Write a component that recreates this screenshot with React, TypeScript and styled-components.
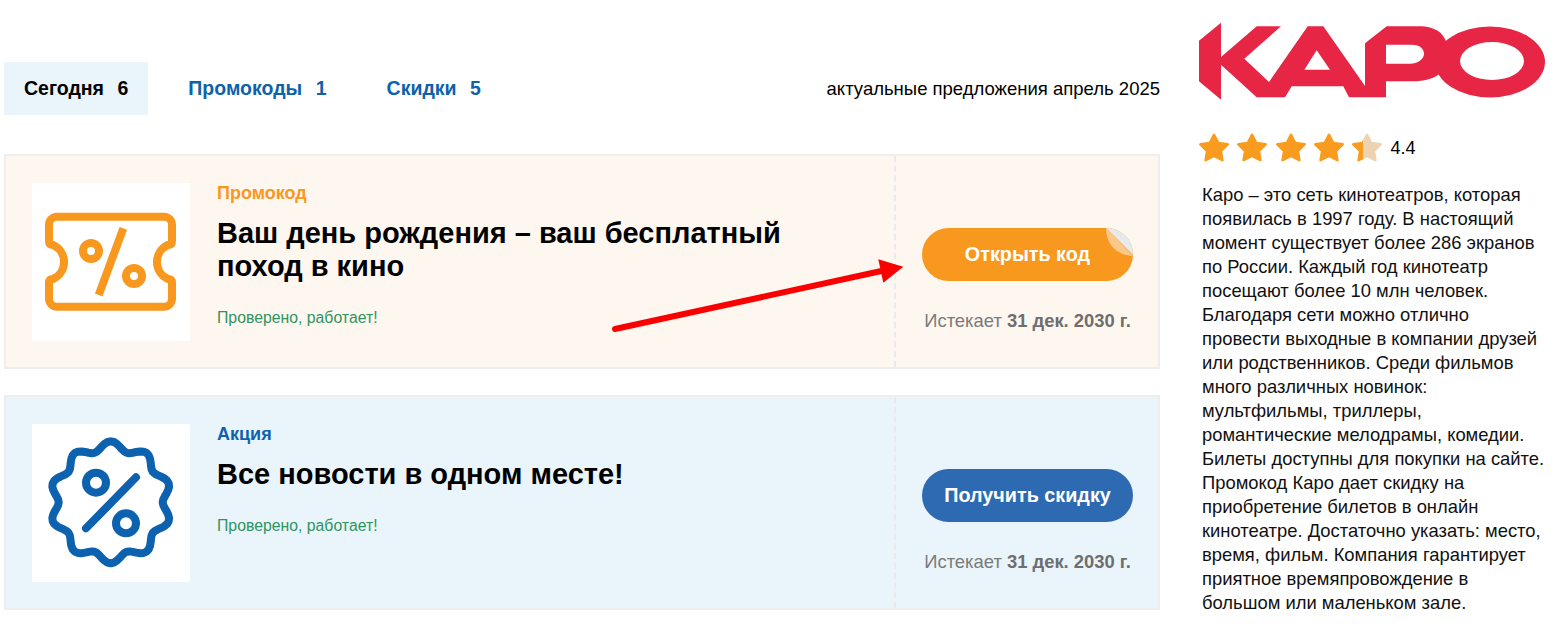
import React from "react";
import styled, { createGlobalStyle } from "styled-components";

const Global = createGlobalStyle`
  html, body { margin: 0; padding: 0; background: #fff; }
  body { font-family: "Liberation Sans", Arial, sans-serif; color: #000; }
`;

const Page = styled.div`
  display: flex;
  align-items: flex-start;
  gap: 38px;
  padding-left: 4px;
`;
const Main = styled.main`
  width: 1156px;
  flex: none;
  padding-top: 62px;
`;
const TabBar = styled.nav`
  display: flex;
  align-items: center;
  gap: 20px;
  height: 53px;
  margin-bottom: 39px;
`;
const Tab = styled.a<{ $active?: boolean }>`
  display: flex;
  align-items: center;
  gap: 13.5px;
  height: 100%;
  padding: 0 20px;
  font-size: 19.5px;
  font-weight: 700;
  color: ${(p) => (p.$active ? "#000" : "#0d62ab")};
  background: ${(p) => (p.$active ? "#eaf4fb" : "transparent")};
`;
const Note = styled.span`
  margin-left: auto;
  font-size: 18.5px;
`;
const Card = styled.article<{ $bg: string }>`
  position: relative;
  display: flex;
  box-sizing: border-box;
  height: 215px;
  margin-bottom: 26px;
  border: 2px solid #eeeeee;
  background: ${(p) => p.$bg};
`;
const CardBody = styled.div`
  flex: 1;
  display: flex;
  gap: 27px;
  padding: 27px 0 0 26px;
`;
const LogoBox = styled.div`
  width: 158px;
  height: 158px;
  flex: none;
  background: #fff;
  svg { display: block; }
`;
const Info = styled.div`
  width: 600px;
`;
const Kind = styled.div<{ $color: string }>`
  font-size: 18px;
  line-height: 21px;
  font-weight: 700;
  color: ${(p) => p.$color};
  margin-bottom: 13px;
`;
const Title = styled.h2`
  margin: 0 0 25px;
  font-size: 29px;
  line-height: 33px;
  font-weight: 700;
`;
const Verified = styled.div`
  font-size: 15.8px;
  line-height: 20px;
  color: #2f9461;
`;
const Side = styled.div`
  width: 264px;
  flex: none;
  box-sizing: border-box;
  border-left: 2px dashed #e9e9ee;
  padding: 72px 0 0 1px;
  display: flex;
  flex-direction: column;
  align-items: center;
`;
const ActionButton = styled.button<{ $bg: string }>`
  position: relative;
  overflow: hidden;
  width: 211px;
  height: 53px;
  border: 0;
  border-radius: 27px;
  padding: 0;
  background: ${(p) => p.$bg};
  color: #fff;
  font: 700 19.8px "Liberation Sans", Arial, sans-serif;
`;
const Peel = styled.svg`
  position: absolute;
  top: 0;
  right: 0;
`;
const Expires = styled.div`
  margin-top: 30px;
  font-size: 18.4px;
  line-height: 20px;
  color: #7a7a7a;
  b { color: #6e6e6e; }
`;
const Arrow = styled.svg`
  position: absolute;
  left: 604px;
  top: 99px;
`;
const Aside = styled.aside`
  width: 350px;
  flex: none;
  padding-top: 18px;
`;
const Brand = styled.svg`
  display: block;
  margin: 0 0 26px -3px;
`;
const Rating = styled.div`
  display: flex;
  align-items: center;
  gap: 8.3px;
  height: 32px;
  margin-left: 1px;
  margin-bottom: 19px;
`;
const RatingValue = styled.span`
  font-size: 18px;
`;
const About = styled.p`
  margin: 0 0 0 4px;
  font-size: 18.4px;
  line-height: 24px;
  color: #111;
`;
const AboutLine = styled.span`
  display: block;
  white-space: nowrap;
`;

const STAR = "15,1.8 19.2,10 28.6,11.4 21.8,18 23.4,27.2 15,22.9 6.6,27.2 8.2,18 1.4,11.4 10.8,10";

const Star = ({ split }: { split?: boolean }) => (
  <svg width="30" height="30" viewBox="0 0 30 30">
    {split && (
      <defs>
        <linearGradient id="part" gradientUnits="userSpaceOnUse" x1="0" x2="30" y1="0" y2="0">
          <stop offset="38%" stopColor="#f99b1e" />
          <stop offset="38%" stopColor="#eed3b3" />
        </linearGradient>
      </defs>
    )}
    <polygon
      points={STAR}
      fill={split ? "url(#part)" : "#f99b1e"}
      stroke={split ? "url(#part)" : "#f99b1e"}
      strokeWidth="2.6"
      strokeLinejoin="round"
    />
  </svg>
);

const TicketIcon = () => (
  <svg width="158" height="158" viewBox="32 183 158 158" fill="none" stroke="#f9981f" strokeWidth="8">
    <path d="M57 216.7H164a8 8 0 0 1 8 8V241q0 4-4 4A18.6 18.6 0 0 0 168 279q4 0 4 4V298.7a8 8 0 0 1-8 8H57a8 8 0 0 1-8-8V283q0-4 4-4A18.6 18.6 0 0 0 53 245q-4 0-4-4V224.7a8 8 0 0 1 8-8Z" />
    <path d="M123.3 228.3L98.7 295" />
    <circle cx="91" cy="251" r="8" />
    <circle cx="134" cy="276" r="8" />
  </svg>
);

const badgePath = () => {
  const pts: string[] = [];
  for (let i = 0; i < 360; i += 3) {
    const a = (i * Math.PI) / 180;
    const r = 56.5 + 4.5 * Math.cos(10 * a);
    pts.push(`${(110.7 + r * Math.sin(a)).toFixed(2)} ${(502.3 - r * Math.cos(a)).toFixed(2)}`);
  }
  return `M${pts.join("L")}Z`;
};

const BadgeIcon = () => (
  <svg width="158" height="158" viewBox="32 424 158 158" fill="none" stroke="#0d62b0" strokeWidth="8" strokeLinecap="round" strokeLinejoin="round">
    <path d={badgePath()} />
    <path d="M86 528.3L136 477.3" />
    <circle cx="96" cy="482.7" r="10" />
    <circle cx="126" cy="523.3" r="10" />
  </svg>
);

const KaroLogo = () => (
  <Brand width="355" height="88" viewBox="1195 18 355 88">
    <path
      fill="#e72545"
      fillRule="evenodd"
      d="M1199 40.7L1221 22.7V57L1256.7 26.3H1281L1244.3 58.7L1269 82L1307.7 26.3H1323.3L1365 86V43.3L1386.7 26.3H1418C1437 26.3 1448 34 1448 54C1448 72 1435 81.3 1413 81.3H1386V97.3H1349L1343.3 86.3H1291.7L1285 97.3H1256.7L1221 64.7V99.7L1199 81.3ZM1316.7 50.3L1304.3 69.7H1330ZM1386 44.7H1412C1420 44.7 1424 49 1424 54C1424 59 1418 63.7 1410 63.7H1386Z"
    />
    <path
      fill="#e72545"
      fillRule="evenodd"
      d="M1435 62a55 35.5 0 1 0 110 0a55 35.5 0 1 0-110 0ZM1460 61a32 19 0 1 0 64 0a32 19 0 1 0-64 0Z"
    />
  </Brand>
);

const tabs = [
  { name: "Сегодня", count: 6, active: true },
  { name: "Промокоды", count: 1 },
  { name: "Скидки", count: 5 },
];

const aboutLines = [
  "Каро – это сеть кинотеатров, которая",
  "появилась в 1997 году. В настоящий",
  "момент существует более 286 экранов",
  "по России. Каждый год кинотеатр",
  "посещают более 10 млн человек.",
  "Благодаря сети можно отлично",
  "провести выходные в компании друзей",
  "или родственников. Среди фильмов",
  "много различных новинок:",
  "мультфильмы, триллеры,",
  "романтические мелодрамы, комедии.",
  "Билеты доступны для покупки на сайте.",
  "Промокод Каро дает скидку на",
  "приобретение билетов в онлайн",
  "кинотеатре. Достаточно указать: место,",
  "время, фильм. Компания гарантирует",
  "приятное времяпровождение в",
  "большом или маленьком зале.",
];

export default function App() {
  return (
    <>
      <Global />
      <Page>
        <Main>
          <TabBar>
            {tabs.map((t) => (
              <Tab key={t.name} $active={t.active}>
                <span>{t.name}</span>
                <span>{t.count}</span>
              </Tab>
            ))}
            <Note>актуальные предложения апрель 2025</Note>
          </TabBar>

          <Card $bg="#fef7f0">
            <CardBody>
              <LogoBox><TicketIcon /></LogoBox>
              <Info>
                <Kind $color="#f9981f">Промокод</Kind>
                <Title>Ваш день рождения – ваш бесплатный поход в кино</Title>
                <Verified>Проверено, работает!</Verified>
              </Info>
            </CardBody>
            <Side>
              <ActionButton $bg="#f9981f">
                Открыть код
                <Peel width="28" height="29" viewBox="1105 228 28 29">
                  <path d="M1106 228H1133V255Z" fill="#e6eaec" />
                  <path d="M1106 228C1106 244 1116 255 1133 256Z" fill="#fbc88b" />
                </Peel>
              </ActionButton>
              <Expires>Истекает <b>31 дек. 2030 г.</b></Expires>
            </Side>
            <Arrow width="300" height="80" viewBox="610 255 300 80">
              <path d="M615 329L886 270" stroke="#fa0000" strokeWidth="6" strokeLinecap="round" fill="none" />
              <polygon points="903.3,266.7 878.3,259.3 883.3,282.7" fill="#fa0000" />
            </Arrow>
          </Card>

          <Card $bg="#e9f4fb">
            <CardBody>
              <LogoBox><BadgeIcon /></LogoBox>
              <Info>
                <Kind $color="#0d62ab">Акция</Kind>
                <Title>Все новости в одном месте!</Title>
                <Verified>Проверено, работает!</Verified>
              </Info>
            </CardBody>
            <Side>
              <ActionButton $bg="#2e6ab1">Получить скидку</ActionButton>
              <Expires>Истекает <b>31 дек. 2030 г.</b></Expires>
            </Side>
          </Card>
        </Main>

        <Aside>
          <KaroLogo />
          <Rating>
            <Star /><Star /><Star /><Star /><Star split />
            <RatingValue>4.4</RatingValue>
          </Rating>
          <About>
            {aboutLines.map((line) => (
              <AboutLine key={line}>{line}</AboutLine>
            ))}
          </About>
        </Aside>
      </Page>
    </>
  );
}
